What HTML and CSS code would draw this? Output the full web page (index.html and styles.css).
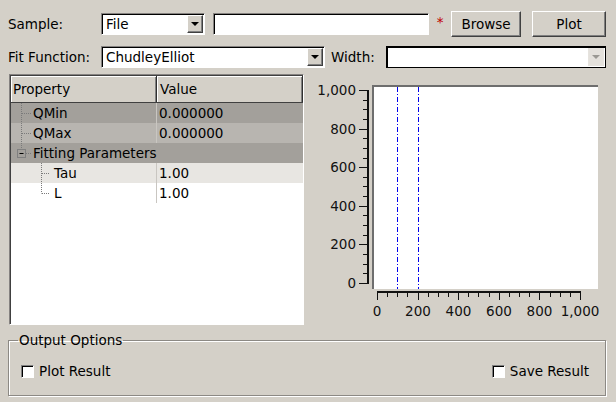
FILE: index.html
```html
<!DOCTYPE html>
<html>
<head>
<meta charset="utf-8">
<link rel="stylesheet" href="styles.css">
</head>
<body>
<div class="app">
  <div class="row r1">
    <span class="lbl lbl-first">Sample:</span>
    <div class="combo combo-file"><span class="combo-text">File</span><span class="combo-btn"><i class="tri"></i></span></div>
    <div class="field field-file"></div>
    <span class="req">*</span>
    <button class="btn btn-browse">Browse</button>
    <button class="btn btn-plot">Plot</button>
  </div>
  <div class="row r2">
    <span class="lbl lbl-first">Fit Function:</span>
    <div class="combo combo-fit"><span class="combo-text">ChudleyElliot</span><span class="combo-btn"><i class="tri"></i></span></div>
    <span class="lbl lbl-width">Width:</span>
    <div class="combo combo-width"><span class="combo-text"></span><span class="combo-btn flat"><i class="tri tri-off"></i></span></div>
  </div>
  <div class="main">
    <div class="tree">
      <div class="thead">
        <div class="th th-prop">Property</div>
        <div class="th th-val">Value</div>
      </div>
      <div class="tr tr-dark">
        <div class="td td-prop"><svg class="branch" width="22" height="20" viewBox="0 0 22 20"><path d="M10.5 0V20M11 10.5H20" /></svg>QMin</div>
        <div class="td td-val">0.000000</div>
      </div>
      <div class="tr tr-mid">
        <div class="td td-prop"><svg class="branch" width="22" height="20" viewBox="0 0 22 20"><path d="M10.5 0V20M11 10.5H20" /></svg>QMax</div>
        <div class="td td-val">0.000000</div>
      </div>
      <div class="tr tr-dark">
        <div class="td td-prop td-span"><svg class="branch" width="22" height="20" viewBox="0 0 22 20"><path d="M10.5 0V6M15 10.5H20" /><rect class="box" x="6.5" y="6.5" width="8" height="8" /><path class="minus" d="M8.5 10.5H12.5" /></svg>Fitting Parameters</div>
      </div>
      <div class="tr tr-light">
        <div class="td td-prop"><svg class="branch" width="43" height="20" viewBox="0 0 43 20"><path d="M30.5 0V20M31 10.5H39" /></svg>Tau</div>
        <div class="td td-val">1.00</div>
      </div>
      <div class="tr tr-white">
        <div class="td td-prop"><svg class="branch" width="43" height="20" viewBox="0 0 43 20"><path d="M30.5 0V10.5M31 10.5H39" /></svg>L</div>
        <div class="td td-val">1.00</div>
      </div>
    </div>
    <div class="plot">
      <svg width="298" height="252" viewBox="0 0 298 252">
        <rect x="62" y="11" width="226" height="204" fill="#fff"/>
        <rect x="62" y="11" width="226" height="2" fill="#6e6e6e"/>
        <rect x="62" y="11" width="2" height="204" fill="#6e6e6e"/>
        <g stroke="#0000ee" stroke-width="1" stroke-dasharray="5 2 1 2" fill="none">
          <path d="M87.5 13V215M108.5 13V215"/>
        </g>
        <g stroke="#111" stroke-width="1" fill="none" shape-rendering="crispEdges">
          <rect x="57" y="16" width="2" height="194" fill="#111" stroke="none"/>
          <path d="M49 16.5H58M49 55.5H58M49 93.5H58M49 132.5H58M49 170.5H58M49 209.5H58"/>
          <path d="M53 26.5H58M53 35.5H58M53 45.5H58M53 64.5H58M53 74.5H58M53 84.5H58M53 103.5H58M53 112.5H58M53 122.5H58M53 141.5H58M53 151.5H58M53 161.5H58M53 180.5H58M53 190.5H58M53 199.5H58"/>
          <rect x="67" y="217" width="204" height="2" fill="#111" stroke="none"/>
          <path d="M67.5 218V226M108.5 218V226M148.5 218V226M189.5 218V226M229.5 218V226M270.5 218V226"/>
          <path d="M77.5 218V223M87.5 218V223M97.5 218V223M118.5 218V223M128.5 218V223M138.5 218V223M158.5 218V223M168.5 218V223M179.5 218V223M199.5 218V223M209.5 218V223M219.5 218V223M240.5 218V223M250.5 218V223M260.5 218V223"/>
        </g>
        <g class="ticklbl" text-anchor="end">
          <text x="46" y="21">1,000</text>
          <text x="46" y="60">800</text>
          <text x="46" y="98">600</text>
          <text x="46" y="137">400</text>
          <text x="46" y="175">200</text>
          <text x="46" y="214">0</text>
        </g>
        <g class="ticklbl" text-anchor="middle">
          <text x="67" y="242">0</text>
          <text x="108" y="242">200</text>
          <text x="148.5" y="242">400</text>
          <text x="189" y="242">600</text>
          <text x="229.5" y="242">800</text>
          <text x="270" y="242">1,000</text>
        </g>
      </svg>
    </div>
  </div>
  <fieldset class="group">
    <legend class="group-title">Output Options</legend>
    <div class="group-row">
      <label class="check"><span class="check-box"></span><span>Plot Result</span></label>
      <label class="check"><span class="check-box"></span><span>Save Result</span></label>
    </div>
  </fieldset>
</div>
</body>
</html>
```
FILE: styles.css
```css
* { box-sizing: border-box; }
html, body { margin: 0; padding: 0; }
body {
  width: 616px;
  height: 402px;
  overflow: hidden;
  background: #d4d0c8;
  font-family: "DejaVu Sans", sans-serif;
  font-size: 13.5px;
  color: #000;
}
.app { display: flex; flex-direction: column; padding-top: 11px; }
.row { display: flex; align-items: center; padding-left: 8px; }
.r1 { height: 26px; }
.r2 { height: 22px; margin-top: 9px; }
.lbl { white-space: nowrap; }
.lbl-first { width: 93px; }
.lbl-width { width: 55px; margin-left: 6px; }

.combo {
  height: 22px;
  background: #fff;
  border: 1px solid;
  border-color: #858280 #fff #fff #858280;
  box-shadow: inset 1px 1px 0 #000;
  display: flex;
  align-items: center;
  padding: 1px 1px 1px 4px;
}
.combo-text { flex: 1; white-space: nowrap; overflow: hidden; }
.combo-file { width: 104px; }
.combo-fit { width: 224px; }
.combo-width { width: 220px; border-color: #000; box-shadow: inset 1px 1px 0 #000; }
.combo-btn {
  width: 16px;
  height: 18px;
  background: #d4d0c8;
  border: 1px solid;
  border-color: #fff #404040 #404040 #fff;
  box-shadow: inset -1px -1px 0 #808080;
  display: flex;
  align-items: center;
  justify-content: center;
}
.combo-btn.flat { border-color: #e6e3de; box-shadow: none; background: #e4e1dc; }
.tri {
  width: 0; height: 0;
  border-left: 4px solid transparent;
  border-right: 4px solid transparent;
  border-top: 4px solid #000;
}
.tri-off { border-top-color: #9a9893; }

.field {
  height: 22px;
  background: #fff;
  border: 1px solid;
  border-color: #858280 #fff #fff #858280;
  box-shadow: inset 1px 1px 0 #000;
}
.field-file { width: 216px; margin-left: 8px; }
.req { width: 22px; text-align: center; color: #c00000; margin-top: -4px; }
.btn {
  height: 26px;
  background: #d4d0c8;
  border: 1px solid;
  border-color: #fff #404040 #404040 #fff;
  box-shadow: inset -1px -1px 0 #808080;
  font-family: "DejaVu Sans", sans-serif;
  font-size: 13.5px;
  color: #000;
  padding: 0;
}
.btn-browse { width: 70px; }
.btn-plot { width: 74px; margin-left: 11px; }

.main { display: flex; height: 252px; margin-top: 6px; }
.tree {
  width: 295px;
  height: 251px;
  margin-left: 9px;
  background: #fff;
  border: 1px solid;
  border-color: #858280 #fff #fff #858280;
  box-shadow: inset 1px 1px 0 #404040;
  padding: 1px 0 0 1px;
}
.thead { display: flex; height: 27px; background: #d4d0c8; border-bottom: 1px solid #404040; }
.th {
  display: flex;
  align-items: center;
  box-shadow: inset 1px 1px 0 #fff, inset -1px 0 0 #808080;
  border-right: 1px solid #303030;
  padding-left: 2px;
}
.th-prop { width: 146px; }
.th-val { flex: 1; padding-left: 3px; }
.tr { display: flex; height: 20px; }
.tr-dark { background: #a3a09b; }
.tr-mid { background: #b8b5b0; }
.tr-light { background: #e8e6e2; }
.tr-white { background: #fff; }
.td { display: flex; align-items: center; white-space: nowrap; }
.td-prop { width: 146px; border-right: 1px solid #c9c6c1; }
.td-span { width: auto; flex: 1; border-right: none; }
.td-val { flex: 1; padding-left: 2px; }
.branch { flex: none; }
.branch path { stroke: #7a7a7a; stroke-width: 1; stroke-dasharray: 1 1; fill: none; }
.branch .box { stroke: #808080; fill: none; stroke-width: 1; }
.branch .minus { stroke: #000; stroke-dasharray: none; }

.plot { width: 298px; margin-left: 6px; }
.plot svg { display: block; }
.ticklbl text { font-family: "DejaVu Sans", sans-serif; font-size: 13.5px; fill: #111; }

.group {
  margin: 7px 10px 0 8px;
  padding: 0 16px 16px 9px;
  border: 1px solid #8c8984;
  box-shadow: inset 1px 1px 0 #fff, 1px 1px 0 #fff;
  min-width: 0;
}
.group-title { padding: 0 1px; margin: 0; line-height: 15px; }
.group-row { display: flex; justify-content: space-between; align-items: center; padding-top: 15px; padding-left: 3px; }
.check { display: flex; align-items: center; gap: 5px; }
.check-box {
  width: 13px;
  height: 13px;
  background: #fff;
  border: 1px solid;
  border-color: #808080 #fff #fff #808080;
  box-shadow: inset 1px 1px 0 #000;
}
```
